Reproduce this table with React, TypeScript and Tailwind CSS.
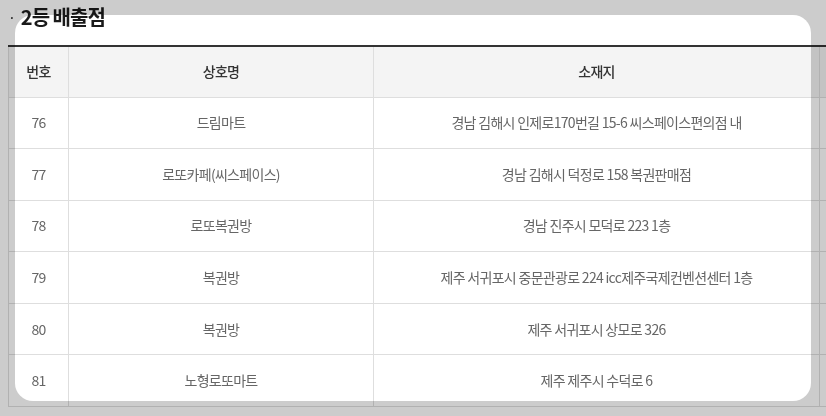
import React from 'react'

type Shop = { no: number; name: string; addr: string }

const shops: Shop[] = [
  { no: 76, name: '드림마트', addr: '경남 김해시 인제로170번길 15-6 씨스페이스편의점 내' },
  { no: 77, name: '로또카페(씨스페이스)', addr: '경남 김해시 덕정로 158 복권판매점' },
  { no: 78, name: '로또복권방', addr: '경남 진주시 모덕로 223 1층' },
  { no: 79, name: '복권방', addr: '제주 서귀포시 중문관광로 224 icc제주국제컨벤션센터 1층' },
  { no: 80, name: '복권방', addr: '제주 서귀포시 상모로 326' },
  { no: 81, name: '노형로또마트', addr: '제주 제주시 수덕로 6' },
]

const font = { fontFamily: '"Noto Sans CJK KR", "Noto Sans", sans-serif' }

export default function App() {
  return (
    <div className="relative w-[826px] h-[416px] overflow-hidden bg-white" style={font}>
      <div className="pl-[8px]">
        {/* Title */}
        <div className="h-[45px] flex items-start pt-[3px]">
          <span className="text-[14px] text-[#333] mr-[5px] mt-[4px]">·</span>
          <h2 className="text-[20px] font-bold text-[#1a1a1a] tracking-[-1px] leading-[28px]">2등 배출점</h2>
        </div>

        <table className="w-[900px] border-collapse table-fixed text-[14px] tracking-[-0.7px]">
          <colgroup>
            <col className="w-[60px]" />
            <col className="w-[305px]" />
            <col className="w-[446px]" />
            <col />
          </colgroup>
          <thead>
            <tr className="h-[51px] bg-[#f4f4f4] border-t-2 border-[#333]">
              <th className="font-medium text-[#333] border-l border-r border-b border-[#dedede]">번호</th>
              <th className="font-medium text-[#333] border-r border-b border-[#dedede]">상호명</th>
              <th className="font-medium text-[#333] border-r border-b border-[#dedede]">소재지</th>
              <th className="border-b border-[#dedede]"></th>
            </tr>
          </thead>
          <tbody>
            {shops.map(s => (
              <tr key={s.no} className="h-[51.6px]">
                <td className="text-center text-[#666] border-l border-r border-b border-[#dedede]">{s.no}</td>
                <td className="text-center text-[#666] border-r border-b border-[#dedede]">{s.name}</td>
                <td className="text-center text-[#666] border-r border-b border-[#dedede]">{s.addr}</td>
                <td className="border-b border-[#dedede]"></td>
              </tr>
            ))}
          </tbody>
        </table>
      </div>

      {/* rounded frame overlay */}
      <div className="absolute inset-0 pointer-events-none mix-blend-multiply">
        <div className="absolute left-[15px] top-[15px] right-[15px] bottom-[15px] rounded-[18px] shadow-[0_0_0_60px_#cccccc]" />
      </div>
    </div>
  )
}
